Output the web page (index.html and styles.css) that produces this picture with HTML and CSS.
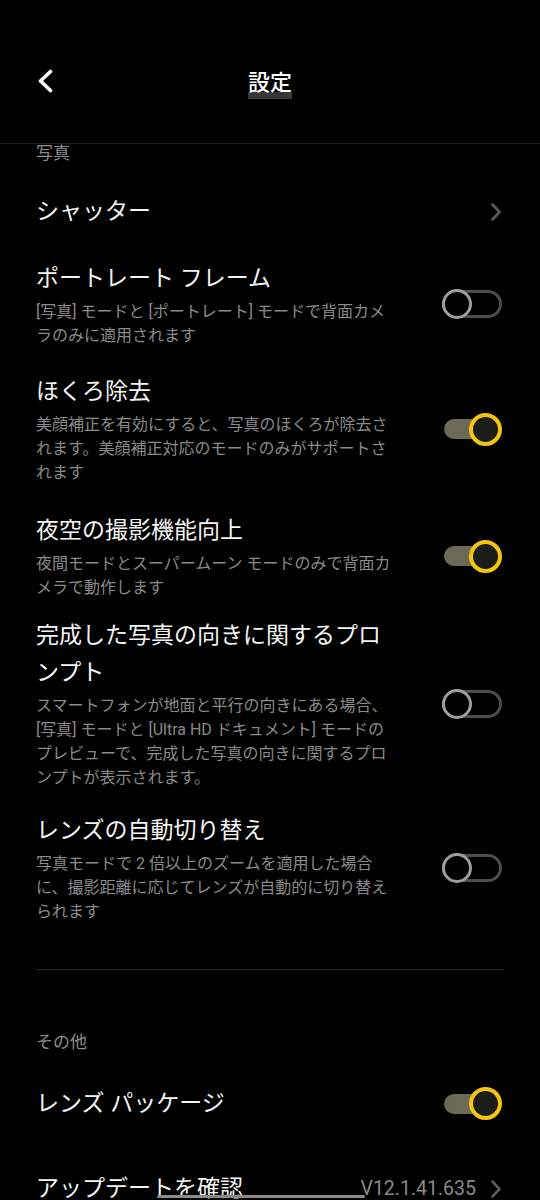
FILE: index.html
```html
<!DOCTYPE html>
<html lang="ja">
<head>
<meta charset="utf-8">
<title>設定</title>
<link rel="stylesheet" href="styles.css">
</head>
<body>
<div class="screen">
  <header class="topbar">
    <div class="back">
      <svg width="16" height="26" viewBox="0 0 16 26"><path d="M13.5 3.5 L3.5 13 L13.5 22.5" fill="none" stroke="#ffffff" stroke-width="3.6" stroke-linecap="round" stroke-linejoin="round"/></svg>
    </div>
    <div class="title-wrap"><h1 class="title">設定</h1></div>
    <div></div>
  </header>
  <main class="scroll">
    <div class="content">
      <div class="section-label first">写真</div>

      <div class="row row-single">
        <div class="text"><div class="row-title">シャッター</div></div>
        <div class="chev"><svg width="12" height="20" viewBox="0 0 12 20"><path d="M2.5 2.5 L9.5 10 L2.5 17.5" fill="none" stroke="#5a5a5a" stroke-width="2.6" stroke-linecap="round" stroke-linejoin="round"/></svg></div>
      </div>

      <div class="row row-portrait">
        <div class="text">
          <div class="row-title">ポートレート フレーム</div>
          <div class="row-sub">[写真] モードと [ポートレート] モードで背面カメラのみに適用されます</div>
        </div>
        <div class="toggle off"><span class="track"></span><span class="knob"></span></div>
      </div>

      <div class="row row-mole">
        <div class="text">
          <div class="row-title">ほくろ除去</div>
          <div class="row-sub">美顔補正を有効にすると、写真のほくろが除去されます。美顔補正対応のモードのみがサポートされます</div>
        </div>
        <div class="toggle on"><span class="track"></span><span class="knob"></span></div>
      </div>

      <div class="row row-night">
        <div class="text">
          <div class="row-title">夜空の撮影機能向上</div>
          <div class="row-sub">夜間モードとスーパームーン モードのみで背面カメラで動作します</div>
        </div>
        <div class="toggle on"><span class="track"></span><span class="knob"></span></div>
      </div>

      <div class="row row-orient">
        <div class="text">
          <div class="row-title">完成した写真の向きに関するプロンプト</div>
          <div class="row-sub">スマートフォンが地面と平行の向きにある場合、[写真] モードと [Ultra HD ドキュメント] モードのプレビューで、完成した写真の向きに関するプロンプトが表示されます。</div>
        </div>
        <div class="toggle off"><span class="track"></span><span class="knob"></span></div>
      </div>

      <div class="row">
        <div class="text">
          <div class="row-title">レンズの自動切り替え</div>
          <div class="row-sub">写真モードで 2 倍以上のズームを適用した場合に、撮影距離に応じてレンズが自動的に切り替えられます</div>
        </div>
        <div class="toggle off"><span class="track"></span><span class="knob"></span></div>
      </div>

      <div class="divider"></div>

      <div class="section-label other">その他</div>

      <div class="row row-tall">
        <div class="text"><div class="row-title">レンズ パッケージ</div></div>
        <div class="toggle on"><span class="track"></span><span class="knob"></span></div>
      </div>

      <div class="row row-tall">
        <div class="text"><div class="row-title">アップデートを確認</div></div>
        <div class="version">V12.1.41.635</div>
        <div class="chev"><svg width="12" height="20" viewBox="0 0 12 20"><path d="M2.5 2.5 L9.5 10 L2.5 17.5" fill="none" stroke="#5a5a5a" stroke-width="2.6" stroke-linecap="round" stroke-linejoin="round"/></svg></div>
      </div>
    </div>
  </main>
  <div class="gesture-bar"></div>
</div>
</body>
</html>
```

FILE: styles.css
```css
html, body {
  margin: 0;
  padding: 0;
  background: #000;
}

body {
  font-family: Roboto, "Noto Sans CJK JP", sans-serif;
  color: #f2f2f2;
  overflow: hidden;
}

.screen {
  position: relative;
  width: 540px;
  height: 1200px;
  overflow: hidden;
  background: #000;
}

.topbar {
  box-sizing: border-box;
  height: 144px;
  padding-top: 68px;
  border-bottom: 1px solid #222222;
  display: grid;
  grid-template-columns: 1fr auto 1fr;
  align-items: start;
}

.back {
  padding-left: 37px;
  height: 26px;
}

.back svg {
  display: block;
}

.title-wrap {
  display: flex;
  justify-content: center;
}

.title {
  margin: 0;
  font-family: "Noto Sans CJK JP", sans-serif;
  font-size: 22px;
  font-weight: 500;
  line-height: 24px;
  color: #ffffff;
  display: inline-block;
}

.title::after {
  content: "";
  display: block;
  height: 7px;
  background: #383838;
}

.scroll {
  height: 1056px;
  overflow: hidden;
}

.content {
  padding: 0 36px;
}

.section-label {
  font-family: "Noto Sans CJK JP", sans-serif;
  font-size: 17px;
  line-height: 24px;
  color: #8c8c8c;
}

.section-label.first {
  margin-top: -4px;
  margin-bottom: 12px;
}

.section-label.other {
  margin-top: 59px;
  margin-bottom: 8px;
}

.row {
  display: flex;
  align-items: center;
  padding: 12px 2px 12px 0;
}

.row-single {
  padding-top: 17px;
  padding-bottom: 18px;
}

.row-portrait {
  padding-bottom: 13px;
}

.row-mole {
  padding-bottom: 15px;
}

.row-night {
  padding-bottom: 5px;
}

.row-orient {
  padding-bottom: 10px;
}

.row-tall {
  padding-top: 24px;
  padding-bottom: 24px;
}

.text {
  flex: 1;
  min-width: 0;
  margin-right: 48px;
}

.row-title {
  font-size: 23px;
  line-height: 37px;
  color: #f4f4f4;
}

.row-sub {
  margin-top: 3px;
  font-size: 16px;
  line-height: 24px;
  color: #8a8a8a;
}

.divider {
  height: 1px;
  margin-top: 33px;
  background: #262626;
}

.chev {
  width: 12px;
  height: 20px;
  flex: none;
}

.chev svg {
  display: block;
}

.version {
  font-family: Roboto, sans-serif;
  font-size: 19.5px;
  color: #8a8a8a;
  margin-right: 14px;
  white-space: nowrap;
}

.toggle {
  position: relative;
  width: 60px;
  height: 34px;
  flex: none;
}

.toggle .track,
.toggle .knob {
  position: absolute;
  box-sizing: border-box;
}

.toggle.off .track {
  left: 0;
  top: 3px;
  width: 60px;
  height: 28px;
  border: 3px solid #4c4c4c;
  border-radius: 14px;
}

.toggle.off .knob {
  left: 0;
  top: 2px;
  width: 30px;
  height: 30px;
  border: 3px solid #9e9e9e;
  border-radius: 50%;
  background: #000;
}

.toggle.on .track {
  left: 2px;
  top: 7px;
  width: 46px;
  height: 20px;
  border-radius: 10px;
  background: #6c6957;
}

.toggle.on .knob {
  left: 27px;
  top: 0.5px;
  width: 33px;
  height: 33px;
  border: 4px solid #f4c40f;
  border-radius: 50%;
  background: #1c1c19;
}

.gesture-bar {
  position: absolute;
  left: 157px;
  top: 1195px;
  width: 208px;
  height: 3px;
  border-radius: 2px;
  background: #8a8a8a;
}
```
